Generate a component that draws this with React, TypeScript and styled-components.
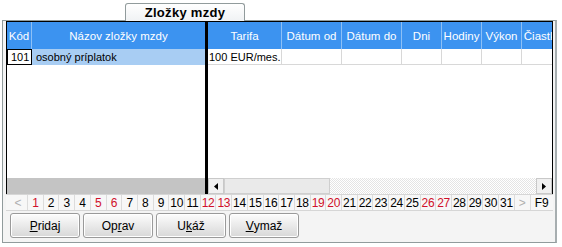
import React from "react";
import styled, { createGlobalStyle } from "styled-components";

const GlobalStyle = createGlobalStyle`
  body {
    margin: 0;
    background: #ffffff;
    font-family: "Liberation Sans", Arial, sans-serif;
    font-size: 11px;
    color: #000;
  }
`;

type Col = { title: string; width: number };

const leftCols: Col[] = [
  { title: "Kód", width: 25 },
  { title: "Názov zložky mzdy", width: 173 },
];

const rightCols: Col[] = [
  { title: "Tarifa", width: 74 },
  { title: "Dátum od", width: 60 },
  { title: "Dátum do", width: 60 },
  { title: "Dni", width: 40 },
  { title: "Hodiny", width: 40 },
  { title: "Výkon", width: 40 },
  { title: "Čiastka", width: 42 },
];

const redDays = [1, 5, 6, 12, 13, 19, 20, 26, 27];
const days = Array.from({ length: 31 }, (_, i) => i + 1);

const buttons: { label: string; key: number }[] = [
  { label: "Pridaj", key: 0 },
  { label: "Oprav", key: 2 },
  { label: "Ukáž", key: 1 },
  { label: "Vymaž", key: 0 },
];

const Arrow = ({ dir }: { dir: "left" | "right" }) => (
  <svg width="4" height="7" viewBox="0 0 4 7">
    {dir === "left" ? (
      <polygon points="4,0 4,7 0,3.5" fill="#000" />
    ) : (
      <polygon points="0,0 0,7 4,3.5" fill="#000" />
    )}
  </svg>
);

const Underlined = ({ text, at }: { text: string; at: number }) => (
  <>
    {text.slice(0, at)}
    <u>{text[at]}</u>
    {text.slice(at + 1)}
  </>
);

const App: React.FC = () => {
  return (
    <Page>
      <GlobalStyle />
      <TabStrip>
        <Tab>Zložky mzdy</Tab>
      </TabStrip>
      <Panel>
        <Grid>
          <Pane width={198}>
            <HeaderRow>
              {leftCols.map((c) => (
                <HeaderCell key={c.title} width={c.width}>
                  {c.title}
                </HeaderCell>
              ))}
            </HeaderRow>
            <DataRow>
              <LeftCell width={25} focused>
                101
              </LeftCell>
              <LeftCell width={173} selected>
                osobný príplatok
              </LeftCell>
            </DataRow>
            <Filler />
            <GrayBlock />
          </Pane>
          <Divider />
          <Pane grow>
            <HeaderRow>
              {rightCols.map((c) => (
                <HeaderCell key={c.title} width={c.width}>
                  {c.title}
                </HeaderCell>
              ))}
            </HeaderRow>
            <DataRow>
              {rightCols.map((c, i) => (
                <RightCell key={c.title} width={c.width}>
                  {i === 0 ? "100 EUR/mes." : ""}
                </RightCell>
              ))}
            </DataRow>
            <Filler />
            <ScrollBar>
              <ScrollButton>
                <Arrow dir="left" />
              </ScrollButton>
              <Thumb />
              <Track />
              <ScrollButton>
                <Arrow dir="right" />
              </ScrollButton>
            </ScrollBar>
          </Pane>
        </Grid>
        <DayRow>
          <NavCell width={19}>&lt;</NavCell>
          {days.map((d) => (
            <DayCell key={d} red={redDays.includes(d)}>
              {d}
            </DayCell>
          ))}
          <NavCell width={16}>&gt;</NavCell>
          <FKey>F9</FKey>
        </DayRow>
        <ButtonRow>
          {buttons.map((b) => (
            <Button key={b.label}>
              <Underlined text={b.label} at={b.key} />
            </Button>
          ))}
        </ButtonRow>
      </Panel>
    </Page>
  );
};

const Page = styled.div`
  width: 562px;
  height: 247px;
  padding-top: 3px;
  box-sizing: border-box;
`;

const TabStrip = styled.div`
  display: flex;
  padding-left: 125px;
  position: relative;
  z-index: 1;
`;

const Tab = styled.div`
  width: 120px;
  height: 18px;
  box-sizing: border-box;
  border: 1px solid #919b9c;
  border-bottom: none;
  border-radius: 3px 3px 0 0;
  background: linear-gradient(#ffffff, #f0f2f4);
  font-weight: bold;
  font-size: 13px;
  letter-spacing: 0.3px;
  display: flex;
  align-items: center;
  justify-content: center;
  margin-bottom: -1px;
`;

const Panel = styled.div`
  margin-left: 2px;
  width: 555px;
  height: 223px;
  box-sizing: border-box;
  border: 1px solid #919b9c;
  border-right: 2px solid #a7aeb0;
  background: #f4f4f4;
  padding: 0 3px 0 3px;
  display: flex;
  flex-direction: column;
`;

const Grid = styled.div`
  display: flex;
  height: 173px;
  width: 547px;
  box-sizing: border-box;
  border: 1px solid #000;
  border-bottom: none;
  background: #fff;
`;

const Pane = styled.div<{ width?: number; grow?: boolean }>`
  display: flex;
  flex-direction: column;
  width: ${(p) => (p.width ? `${p.width}px` : "auto")};
  flex: ${(p) => (p.grow ? 1 : "none")};
  overflow: hidden;
`;

const Divider = styled.div`
  width: 3px;
  background: #000;
`;

const HeaderRow = styled.div`
  display: flex;
  height: 27px;
  background: #3c93f0;
  font-size: 11.5px;
`;

const HeaderCell = styled.div<{ width: number }>`
  flex: none;
  width: ${(p) => p.width}px;
  box-sizing: border-box;
  border-right: 1px solid #8dc0f6;
  color: #fff;
  display: flex;
  align-items: center;
  justify-content: center;
  white-space: nowrap;
  &:last-child {
    border-right: none;
  }
`;

const DataRow = styled.div`
  display: flex;
  height: 16px;
`;

const LeftCell = styled.div<{ width: number; focused?: boolean; selected?: boolean }>`
  flex: none;
  width: ${(p) => p.width}px;
  box-sizing: border-box;
  display: flex;
  align-items: center;
  padding-left: ${(p) => (p.focused ? "3px" : "4px")};
  white-space: nowrap;
  background: ${(p) => (p.selected ? "#a8cdf3" : "#fff")};
  border: ${(p) => (p.focused ? "1px solid #000" : "none")};
`;

const RightCell = styled.div<{ width: number }>`
  flex: none;
  width: ${(p) => p.width}px;
  box-sizing: border-box;
  border-right: 1px solid #d8d8d8;
  border-bottom: 1px solid #d8d8d8;
  display: flex;
  align-items: center;
  padding-left: 1px;
  white-space: nowrap;
  overflow: hidden;
`;

const Filler = styled.div`
  flex: 1;
`;

const GrayBlock = styled.div`
  height: 16px;
  background: #c4c4c4;
`;

const ScrollBar = styled.div`
  display: flex;
  height: 16px;
`;

const ScrollButton = styled.div`
  width: 16px;
  box-sizing: border-box;
  border: 1px solid #c8c8c8;
  background: #f0f0f0;
  display: flex;
  align-items: center;
  justify-content: center;
`;

const Thumb = styled.div`
  width: 106px;
  box-sizing: border-box;
  border: 1px solid #cfcfcf;
  background: #eaeaea;
`;

const Track = styled.div`
  flex: 1;
  background: repeating-conic-gradient(#ffffff 0 25%, #e4e4e4 0 50%) 0 0 / 2px 2px;
`;

const DayRow = styled.div`
  display: flex;
  height: 17px;
  width: 547px;
  box-sizing: border-box;
  padding-left: 3px;
  border-top: 1px solid #d6d6d6;
  border-bottom: 1px solid #d6d6d6;
  background: #f7f7f7;
  font-size: 12px;
`;

const NavCell = styled.div<{ width: number }>`
  flex: none;
  width: ${(p) => p.width}px;
  box-sizing: border-box;
  border-right: 1px solid #dcdcdc;
  color: #b0b0b0;
  display: flex;
  align-items: center;
  justify-content: center;
`;

const DayCell = styled.div<{ red: boolean }>`
  flex: 1;
  box-sizing: border-box;
  border-right: 1px solid #dcdcdc;
  color: ${(p) => (p.red ? "#d0102a" : "#000")};
  display: flex;
  align-items: center;
  justify-content: center;
  letter-spacing: -0.3px;
`;

const FKey = styled.div`
  flex: none;
  width: 22px;
  display: flex;
  align-items: center;
  justify-content: center;
`;

const ButtonRow = styled.div`
  display: flex;
  gap: 3px;
  padding: 2px 0 0 4px;
`;

const Button = styled.div`
  width: 70px;
  height: 25px;
  box-sizing: border-box;
  border: 1px solid #9a9a9a;
  border-radius: 3px;
  background: linear-gradient(#fdfdfd, #e6e6e6 60%, #d8d8d8);
  box-shadow: inset 0 0 0 1px #ffffff;
  display: flex;
  align-items: center;
  justify-content: center;
  font-size: 12px;
`;

export default App;
